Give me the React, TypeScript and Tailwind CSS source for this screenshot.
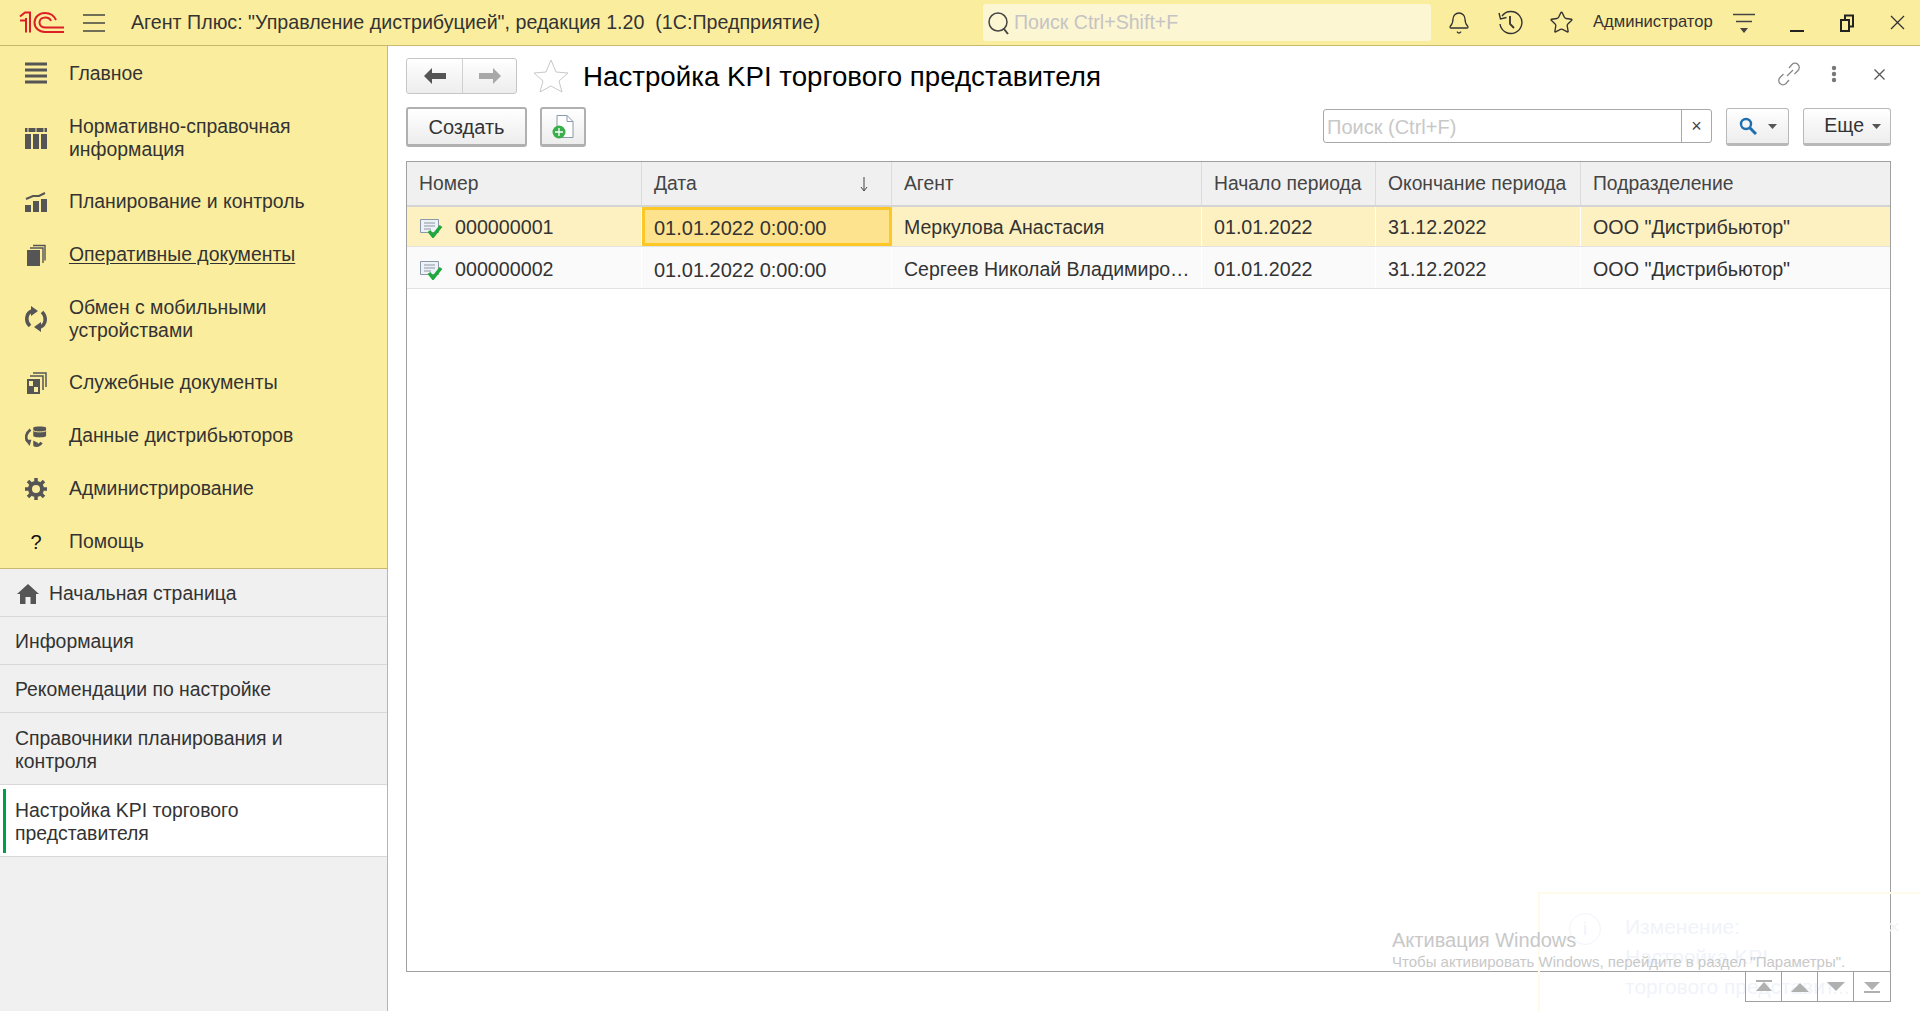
import { Bell, Star } from "lucide-react";
import type { ReactNode } from "react";

const font = "font-['Liberation_Sans',Arial,sans-serif]";

const Logo = () => (
  <svg width="46" height="23" viewBox="0 0 46 23" fill="none" stroke="#dc1f26" strokeWidth="2">
    <path d="M1 5.5 L6 1.5 H11 V21.5 M7 7 V21.5 M1 9.5 H7" />
    <path d="M45 21 H26 C20 21 15.5 17 15.5 11.5 C15.5 6 20 2 26 2 C31 2 35 4.5 37 9" />
    <path d="M45 16.5 H26.5 C23 16.5 20.5 14.5 20.5 11.5 C20.5 8.5 23 6.5 26.5 6.5 C29 6.5 31 7.5 32 10" />
  </svg>
);

const Burger = () => (
  <svg width="22" height="18" viewBox="0 0 22 18" stroke="#444" strokeWidth="1.4">
    <path d="M0 1h22M0 9h22M0 17h22" />
  </svg>
);

const MenuIcon = ({ name }: { name: string }) => {
  if (name === "main")
    return (
      <svg width="22" height="22" viewBox="0 0 22 22" stroke="#555" strokeWidth="3">
        <path d="M0 2h22M0 8h22M0 14h22M0 20h22" />
      </svg>
    );
  if (name === "ref")
    return (
      <svg width="22" height="22" viewBox="0 0 22 22" fill="#555">
        <path d="M0 1h22v4H0zM0 7h6v15H0zM8 7h6v15H8zM16 7h6v15h-6z" />
        <path d="M3 1v4M11 1v4M19 1v4" stroke="#fbed9e" strokeWidth="1" />
      </svg>
    );
  if (name === "plan")
    return (
      <svg width="22" height="22" viewBox="0 0 22 22" fill="#555">
        <path d="M0 14h6v7H0zM8 10h6v11H8zM16 8h6v13h-6z" />
        <path d="M1 8l7-3 6 0 6-3" stroke="#555" strokeWidth="2" fill="none" />
      </svg>
    );
  if (name === "docs")
    return (
      <svg width="22" height="22" viewBox="0 0 22 22" fill="#555">
        <path d="M2 6h13v16H2z" />
        <path d="M5 4h13v15M8 1.5h12v15" fill="none" stroke="#555" strokeWidth="1.4" />
      </svg>
    );
  if (name === "sync")
    return (
      <svg width="22" height="22" viewBox="0 0 22 22" fill="none" stroke="#555" strokeWidth="3.6" className="overflow-visible">
        <path d="M5 18 C0 13 1 5 7 3" />
        <path d="M17 4 C22 9 21 17 15 19" />
        <path d="M6 -2v10l7-5zM16 14v10l-7-5z" fill="#555" stroke="none" />
      </svg>
    );
  if (name === "service")
    return (
      <svg width="22" height="22" viewBox="0 0 22 22" fill="#555">
        <path d="M2 7h13v15H2z" />
        <path d="M4 9h4v5H4zM9 15h4v5H9z" fill="#fbed9e" />
        <path d="M5 4h13v14M8 1h13v14" fill="none" stroke="#555" strokeWidth="1.5" />
      </svg>
    );
  if (name === "data")
    return (
      <svg width="24" height="22" viewBox="0 0 24 22" fill="#555">
        <path d="M9 2c0-2 14-2 14 0v9c0 2-14 2-14 0z" />
        <path d="M9 5c1 2 13 2 14 0" stroke="#fbed9e" strokeWidth="1" fill="none" />
        <path d="M6 4C1 8 0 13 3 17" stroke="#555" strokeWidth="3" fill="none" />
        <path d="M10 21c3 1 6 0 8-3" stroke="#555" strokeWidth="3" fill="none" />
        <path d="M0 15h7l-2 7zM9 16v6l6-3z" />
      </svg>
    );
  if (name === "gear")
    return (
      <svg width="22" height="22" viewBox="0 0 22 22" fill="none" stroke="#555">
        <circle cx="11" cy="11" r="6" strokeWidth="4" />
        <path d="M11 0v5M11 17v5M0 11h5M17 11h5M3 3l4 4M15 15l4 4M19 3l-4 4M7 15l-4 4" strokeWidth="3.5" />
      </svg>
    );
  return <span className="text-[20px] leading-none text-[#111]">?</span>;
};

const menu = [
  { icon: "main", lines: ["Главное"], h: "h-[54px]" },
  { icon: "ref", lines: ["Нормативно-справочная", "информация"], h: "h-[75px]" },
  { icon: "plan", lines: ["Планирование и контроль"], h: "h-[53px]" },
  { icon: "docs", lines: ["Оперативные документы"], h: "h-[53px]", u: true },
  { icon: "sync", lines: ["Обмен с мобильными", "устройствами"], h: "h-[75px]" },
  { icon: "service", lines: ["Служебные документы"], h: "h-[53px]" },
  { icon: "data", lines: ["Данные дистрибьюторов"], h: "h-[53px]" },
  { icon: "gear", lines: ["Администрирование"], h: "h-[53px]" },
  { icon: "help", lines: ["Помощь"], h: "h-[53px]" },
];

const tabs = [
  { lines: ["Начальная страница"], home: true, h: "h-[48px]" },
  { lines: ["Информация"], h: "h-[48px]" },
  { lines: ["Рекомендации по настройке"], h: "h-[48px]" },
  { lines: ["Справочники планирования и", "контроля"], h: "h-[72px]" },
];

const Sidebar = () => (
  <aside className="flex w-[388px] shrink-0 flex-col border-r border-[#c9b96c] bg-[#f0f0f0] text-[19.4px] leading-[23px] text-[#333]">
    <nav className="flex flex-col border-b border-[#c9b96c] bg-[#fbed9e]">
      {menu.map((m) => (
        <div key={m.icon} className={"flex items-center pl-[25px] " + m.h}>
          <div className="flex w-[44px] shrink-0 items-center">
            <div className="flex w-[22px] justify-center">
              <MenuIcon name={m.icon} />
            </div>
          </div>
          <div className={m.u ? "underline underline-offset-2" : ""}>
            {m.lines.map((l) => (
              <div key={l}>{l}</div>
            ))}
          </div>
        </div>
      ))}
    </nav>
    {tabs.map((t) => (
      <div key={t.lines[0]} className={"flex items-center border-b border-[#d8d8d8] px-[15px] pt-[2px] " + t.h}>
        {t.home && (
          <svg width="24" height="20" viewBox="0 0 24 20" fill="#555" className="mr-[9px] ml-[1px]">
            <path d="M12 0 L23 10 H20 V20 H14.5 V13 H9.5 V20 H4 V10 H1 Z" />
          </svg>
        )}
        <div>
          {t.lines.map((l) => (
            <div key={l}>{l}</div>
          ))}
        </div>
      </div>
    ))}
    <div className="relative flex h-[72px] items-center border-b border-[#d8d8d8] bg-white px-[15px] pt-[2px]">
      <span className="absolute top-[4px] bottom-[3px] left-[3px] w-[3px] bg-[#00a04a]" />
      <div>
        <div>Настройка KPI торгового</div>
        <div>представителя</div>
      </div>
    </div>
  </aside>
);

const TopBar = () => (
  <header className="flex h-[46px] shrink-0 items-center border-b border-[#c9b96c] bg-[#fbed9e] text-[#333]">
    <div className="ml-[19px]">
      <Logo />
    </div>
    <div className="ml-[18px]">
      <Burger />
    </div>
    <div className="ml-[26px] w-[852px] text-[19.65px] whitespace-nowrap">
      Агент Плюс: "Управление дистрибуцией", редакция 1.20&nbsp;&nbsp;(1С:Предприятие)
    </div>
    <div className="flex h-[37px] w-[448px] items-center rounded-[3px] bg-[#fdf6d2] pl-[4px]">
      <svg width="24" height="26" viewBox="0 0 24 26" fill="none" stroke="#444" strokeWidth="1.5">
        <circle cx="11" cy="12" r="9" />
        <path d="M17 19l4 5" strokeWidth="2" />
      </svg>
      <span className="ml-[3px] text-[19.6px] text-[#c4c4c4]">Поиск Ctrl+Shift+F</span>
    </div>
    <div className="ml-[16px] flex items-center text-[#333]">
      <Bell size={24} strokeWidth={1.3} />
      <svg width="26" height="26" viewBox="0 0 26 26" fill="none" stroke="#333" strokeWidth="1.4" className="ml-[26px]">
        <path d="M5 6a11 11 0 1 1-2 8" />
        <path d="M2 3l1.5 6 6-1.5" />
        <path d="M13 6v8l4 4" strokeWidth="1.8" />
      </svg>
      <Star size={25} strokeWidth={1.3} className="ml-[26px]" />
    </div>
    <span className="ml-[19px] w-[129px] text-[16.6px] whitespace-nowrap text-[#333]">Администратор</span>
    <svg width="22" height="24" viewBox="0 0 22 24" fill="#444" stroke="#444" className="ml-[11px]">
      <path d="M0 3.5h22M3 10.5h16" strokeWidth="1.4" />
      <path d="M7 17h8l-4 5z" stroke="none" />
    </svg>
    <span className="ml-[35px] h-[2px] w-[14px] translate-y-[8px] bg-[#222]" />
    <svg width="16" height="18" viewBox="0 0 16 18" fill="none" stroke="#222" strokeWidth="2" className="ml-[35px]">
      <path d="M2 6h8v11H2z" />
      <path d="M6 5V1.5h8v11h-3" />
    </svg>
    <svg width="15" height="15" viewBox="0 0 15 15" stroke="#333" strokeWidth="1.3" className="ml-[35px]">
      <path d="M1 1l13 13M14 1L1 14" />
    </svg>
  </header>
);

const Btn = ({ className, children }: { className: string; children: ReactNode }) => (
  <div className={"flex items-center justify-center rounded-[3px] bg-linear-to-b from-white to-[#ededed] " + className}>
    {children}
  </div>
);

const Caret = () => (
  <svg width="9" height="5" viewBox="0 0 9 5" fill="#555">
    <path d="M0 0h9L4.5 5z" />
  </svg>
);

const DocOk = ({ className }: { className: string }) => (
  <svg width="23" height="19" viewBox="0 0 23 19" className={className}>
    <path d="M.5.5h18v13H.5z" fill="#eef1f5" stroke="#8a99a8" />
    <path d="M4 4h11M4 7h11M4 10h7" stroke="#8a99a8" />
    <path d="M9 12l4 5 8-10" fill="none" stroke="#1fa83c" strokeWidth="3.5" />
  </svg>
);

const cols = [
  { t: "Номер", w: "w-[235px]" },
  { t: "Дата", w: "w-[250px]" },
  { t: "Агент", w: "w-[310px]" },
  { t: "Начало периода", w: "w-[174px]" },
  { t: "Окончание периода", w: "w-[205px]" },
  { t: "Подразделение", w: "flex-1" },
];

const rows = [
  { num: "000000001", agent: "Меркулова Анастасия", h: "h-[40px] bg-[#fdf1c1]", text: "translate-y-[1px]", icon: "translate-y-[2px]", active: true },
  { num: "000000002", agent: "Сергеев Николай Владимирович", h: "h-[42px] bg-[#fafafa]", text: "translate-y-[2px]", icon: "translate-y-[3px]" },
];

const pager = ["M1 0h16v2H1zM9 2l8 9H1z", "M9 3l9 9H0z", "M0 2h18l-9 9z", "M1 2h16l-8 8zM1 11h16v2H1z"];

const Table = () => (
  <div className="relative mr-[29px] ml-[18px] h-[811px] border border-[#a0a0a0] text-[19.7px] text-[#333]">
    <div className="flex h-[45px] border-b-2 border-[#d4d4d4] bg-[#f0f0f0] text-[19.3px] text-[#444]">
      {cols.map((c, i) => (
        <div key={c.t} className={"flex items-center border-r border-[#dcdcdc] px-[12px] pt-[1px] whitespace-nowrap last:border-r-0 " + c.w}>
          {c.t}
          {i === 1 && (
            <svg width="10" height="15" viewBox="0 0 10 15" fill="none" stroke="#444" className="mr-[10px] ml-auto">
              <path d="M5 0v13M2 10l3 4 3-4" />
            </svg>
          )}
        </div>
      ))}
    </div>
    {rows.map((r) => (
      <div key={r.num} className={"flex items-stretch border-b border-[#e2e2e2] " + r.h}>
        <div className="flex w-[235px] items-center gap-[12px] border-r border-white pl-[13px]">
          <DocOk className={r.icon} />
          <span className={r.text}>{r.num}</span>
        </div>
        <div className={"flex w-[250px] items-center text-[20px] " + (r.active ? "border-[3px] border-[#fdc825] bg-[#fee38f] px-[9px]" : "border-r border-white px-[12px]")}>
          <span className={r.text}>01.01.2022 0:00:00</span>
        </div>
        <div className="flex w-[310px] items-center border-r border-white pr-[8px] pl-[12px]">
          <span className={"truncate text-[19.5px] " + r.text}>{r.agent}</span>
        </div>
        <div className="flex w-[174px] items-center border-r border-white px-[12px]">
          <span className={r.text}>01.01.2022</span>
        </div>
        <div className="flex w-[205px] items-center border-r border-white px-[12px]">
          <span className={r.text}>31.12.2022</span>
        </div>
        <div className="flex flex-1 items-center px-[12px]">
          <span className={r.text}>ООО "Дистрибьютор"</span>
        </div>
      </div>
    ))}
    <div className="absolute right-[-1px] bottom-[-31px] z-10 flex h-[31px] border border-[#a0a0a0]">
      {pager.map((d, i) => (
        <div key={d} className={"flex w-[36px] items-center justify-center " + (i < 3 ? "border-r border-[#a0a0a0]" : "")}>
          <svg width="18" height="14" viewBox="0 0 18 14" fill="#b0b0b0">
            <path d={d} />
          </svg>
        </div>
      ))}
    </div>
  </div>
);

const Overlay = () => (
  <>
    <div className="absolute top-[892px] right-0 bottom-0 left-[1538px] border-t-2 border-l-2 border-[#fffbeb] text-[21px] leading-[30px] text-[#f1f3fa]">
      <div className="absolute top-[19px] left-[29px] flex h-[32px] w-[32px] items-center justify-center rounded-full border border-[#f1f4fb] text-[18px]">i</div>
      <div className="absolute top-[18px] left-[85px]">Изменение:</div>
      <div className="absolute top-[48px] left-[85px]">Настройка KPI</div>
      <div className="absolute top-[78px] left-[85px] whitespace-nowrap">торгового представит...</div>
      <span className="absolute top-[18px] right-[20px] text-[#f4f4f4]">×</span>
    </div>
    <div className="absolute top-[926px] left-[1392px] text-[20px] leading-[28px] text-[#c8c8c8]">Активация Windows</div>
    <div className="absolute top-[953px] left-[1392px] text-[15px] leading-[18px] whitespace-nowrap text-[#c8c8c8]">
      Чтобы активировать Windows, перейдите в раздел "Параметры".
    </div>
  </>
);

const Form = () => (
  <main className="min-w-0 flex-1 bg-white">
    <div className="flex h-[61px] items-start pt-[12px] pr-[29px] pl-[18px]">
      <div className="flex h-[36px] w-[111px] rounded-[3px] border border-[#c6c6c6] bg-linear-to-b from-white to-[#ededed]">
        <div className="flex w-[56px] items-center justify-center border-r border-[#d0d0d0]">
          <svg width="22" height="16" viewBox="0 0 22 16" fill="#555">
            <path d="M8 0L0 8l8 8v-5h14V5H8z" />
          </svg>
        </div>
        <div className="flex flex-1 items-center justify-center">
          <svg width="22" height="16" viewBox="0 0 22 16" fill="#a8a8a8">
            <path d="M14 0l8 8-8 8v-5H0V5h14z" />
          </svg>
        </div>
      </div>
      <svg width="36" height="34" viewBox="0 0 36 34" fill="none" stroke="#c8c8c8" className="mt-[1px] ml-[16px]">
        <path d="M18 1l5 12 12 1-9 8 3 11-11-6-11 6 3-11-9-8 12-1z" />
      </svg>
      <h1 className="ml-[14px] pt-[2px] text-[27.7px] leading-[34px] font-normal whitespace-nowrap text-black">
        Настройка KPI торгового представителя
      </h1>
      <div className="ml-auto flex items-center pt-[4px]">
        <svg width="24" height="24" viewBox="0 0 24 24" fill="none" stroke="#888" strokeWidth="1.3" className="-mr-[1px] -translate-x-[1px]">
          <path d="M10 14l6-6" />
          <path d="M12 6l3-3.5a4 4 0 0 1 6 6L17.5 12M12 18l-3 3.5a4 4 0 0 1-6-6L6.5 12" />
        </svg>
        <svg width="6" height="18" viewBox="0 0 6 18" fill="#777" className="ml-[30px]">
          <circle cx="3" cy="3" r="2.2" />
          <circle cx="3" cy="9" r="2.2" />
          <circle cx="3" cy="15" r="2.2" />
        </svg>
        <svg width="11" height="11" viewBox="0 0 11 11" stroke="#555" strokeWidth="1.3" className="mr-[6px] ml-[37px]">
          <path d="M.5.5l10 10M10.5.5l-10 10" />
        </svg>
      </div>
    </div>
    <div className="flex h-[54px] items-start pr-[29px] pl-[18px] text-[20px] text-[#333]">
      <Btn className="h-[40px] w-[121px] border-2 border-b-[3px] border-[#b0b0b0]">Создать</Btn>
      <Btn className="ml-[13px] h-[40px] w-[46px] border-2 border-b-[3px] border-[#b0b0b0]">
        <svg width="22" height="24" viewBox="0 0 22 24">
          <path d="M5 .5h10l6 6v16H5z" fill="#fff" stroke="#8a99a8" />
          <path d="M15 .5v6h6" fill="none" stroke="#8a99a8" />
          <circle cx="7" cy="17" r="6.5" fill="#3aae4a" />
          <path d="M3 17h8M7 13v8" stroke="#fff" strokeWidth="1.3" />
        </svg>
      </Btn>
      <div className="mt-[2px] ml-auto flex h-[34px] w-[389px] rounded-[3px] border border-[#a8a8a8] bg-white text-[#c8c8c8]">
        <div className="flex-1 pl-[3px] leading-[34px]">Поиск (Ctrl+F)</div>
        <div className="flex w-[30px] items-center justify-center border-l border-[#a8a8a8] text-[18px] text-[#444]">×</div>
      </div>
      <Btn className="mt-[1px] ml-[14px] h-[38px] w-[63px] gap-[11px] border border-b-[3px] border-[#b8b8b8]">
        <svg width="18" height="18" viewBox="0 0 18 18" fill="none" stroke="#1e6fb0" strokeWidth="2.4">
          <circle cx="7" cy="7" r="5" />
          <path d="M11 11l6 6" strokeWidth="3" />
        </svg>
        <Caret />
      </Btn>
      <Btn className="mt-[1px] ml-[14px] h-[38px] w-[88px] justify-end gap-[8px] border border-b-[3px] border-[#b8b8b8] pr-[9px] text-[19.5px]">
        Еще
        <Caret />
      </Btn>
    </div>
    <Table />
  </main>
);

export default function App() {
  return (
    <div className={"relative flex h-[1011px] w-[1920px] flex-col overflow-hidden " + font}>
      <TopBar />
      <div className="flex min-h-0 flex-1">
        <Sidebar />
        <Form />
      </div>
      <Overlay />
    </div>
  );
}
